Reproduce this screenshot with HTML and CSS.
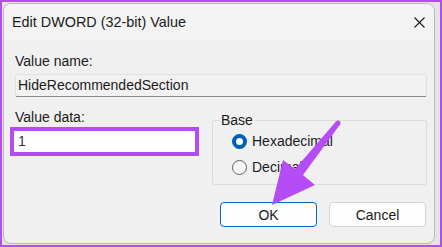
FILE: index.html
```html
<!DOCTYPE html>
<html>
    <head>
        <meta charset="utf-8">
        <title>Edit DWORD (32-bit) Value</title>
        <link rel="stylesheet" href="styles.css">
    </head>
    <body>
        <div class="frame">
            <div class="dialog">
                <div class="titlebar">
                    <span class="titlebar__text">Edit DWORD (32-bit) Value</span>
                    <span class="titlebar__close">
                        <svg width="11" height="11" viewBox="0 0 11 11">
                            <path d="M0.5 0.5 L10.5 10.5 M10.5 0.5 L0.5 10.5" stroke="#1b1b1b" stroke-width="1.1" fill="none"/>
                        </svg>
                    </span>
                </div>
                <div class="body">
                    <div class="label">Value name:</div>
                    <div class="field field--name">HideRecommendedSection</div>
                    <div class="row">
                        <div class="data">
                            <div class="label label--data">Value data:</div>
                            <div class="field field--data">1</div>
                        </div>
                        <fieldset class="base">
                            <legend class="base__title">Base</legend>
                            <div class="radio radio--checked"><span class="radio__dot"></span>Hexadecimal</div>
                            <div class="radio"><span class="radio__dot"></span>Decimal</div>
                        </fieldset>
                    </div>
                    <div class="buttons">
                        <button class="btn btn--default">OK</button>
                        <button class="btn">Cancel</button>
                    </div>
                </div>
            </div>
            <!-- annotation arrow drawn over the dialog -->
            <svg class="arrow" width="442" height="247" viewBox="0 0 442 247">
                <polygon points="272,205 283,160 295,169 336,121.5 340,124.5 303,175 315,185" fill="#b64cf6"/>
                <circle cx="338" cy="123" r="2.5" fill="#b64cf6"/>
            </svg>
        </div>
    </body>
</html>
```

FILE: styles.css
```css
:root {
    --font-main: 'Liberation Sans', Arial, sans-serif;
    --fz: 14px;

    --color-purple: #b34cf4;
    --color-text: #1b1b1b;
    --color-window: #f0f0f0;
    --color-title: #f3f3f3;
    --color-line: #dcdcdc;
    --color-accent: #005fb8;
}
html, body {
    margin: 0;
    padding: 0;
}
body {
    font-family: var(--font-main);
    font-size: var(--fz);
    color: var(--color-text);
}
.frame {
    position: relative;
    box-sizing: border-box;
    width: 442px;
    height: 247px;
    border: 2px solid var(--color-purple);
    background-color: #e4e4e4;
    padding: 1px 5px 1px 1px;
}
.dialog {
    box-sizing: border-box;
    height: 100%;
    border: 1px solid #b9b9b9;
    border-radius: 8px;
    background-color: var(--color-window);
    display: flex;
    flex-direction: column;
    overflow: hidden;
}
.titlebar {
    display: flex;
    align-items: center;
    height: 36px;
    padding-left: 8px;
    background-color: var(--color-title);
    font-size: 14.4px;
}
.titlebar__text {
    flex: 1;
}
.titlebar__close {
    display: flex;
    align-items: center;
    justify-content: center;
    width: 30px;
    height: 36px;
}
.body {
    padding: 12px 7px 0 11px;
}
.label {
    line-height: 18px;
}
.field {
    box-sizing: border-box;
}
.field--name {
    margin-top: 4px;
    height: 23px;
    line-height: 21px;
    padding-left: 2px;
    border: 1px solid #e2e2e2;
    border-bottom-color: #878787;
    border-radius: 2px;
    background-color: #f2f2f2;
}
.row {
    display: flex;
    gap: 13px;
    margin-top: 11px;
}
.data {
    width: 189px;
    margin-left: -5px;
}
.label--data {
    padding-left: 5px;
}
.field--data {
    margin-top: 1px;
    height: 29px;
    line-height: 21px;
    padding-left: 4px;
    border: 4px solid var(--color-purple);
    background-color: #fff;
    color: #2a3550;
}
.base {
    flex: 1;
    box-sizing: border-box;
    height: 73px;
    margin: 4px 0 0;
    padding: 4px 0 0 19px;
    border: 1px solid var(--color-line);
    border-radius: 2px;
    min-width: 0;
}
.base__title {
    margin-left: -13px;
    padding: 0 2px;
    line-height: 16px;
}
.radio {
    display: flex;
    align-items: center;
    gap: 5px;
    line-height: 18px;
}
.radio + .radio {
    margin-top: 8px;
}
.radio__dot {
    box-sizing: border-box;
    width: 15px;
    height: 15px;
    border: 1px solid #5f5f5f;
    border-radius: 50%;
    background-color: #f6f6f6;
}
.radio--checked .radio__dot {
    border: 4.5px solid var(--color-accent);
    background-color: #fff;
}
.buttons {
    display: flex;
    justify-content: flex-end;
    gap: 12px;
    margin-top: 17px;
    padding-right: 1px;
}
.btn {
    box-sizing: border-box;
    width: 97px;
    height: 25px;
    font-family: var(--font-main);
    font-size: var(--fz);
    color: var(--color-text);
    background-color: #fdfdfd;
    border: 1px solid #d3d3d3;
    border-radius: 4px;
    padding: 0;
}
.btn--default {
    border-color: #0067c0;
}
.arrow {
    position: absolute;
    top: -2px;
    left: -2px;
    pointer-events: none;
}
```
